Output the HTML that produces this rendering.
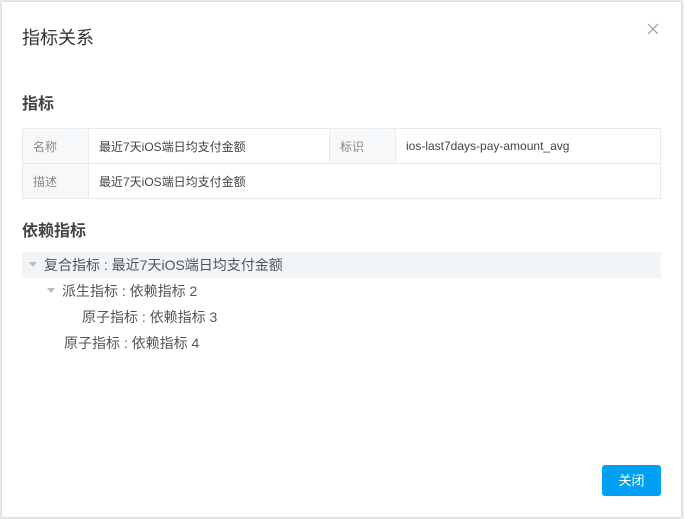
<!DOCTYPE html>
<html><head><meta charset="utf-8"><style>
*{box-sizing:border-box;margin:0;padding:0}
body{width:684px;height:519px;background:#f0f0f0;font-family:"Liberation Sans","Noto Sans CJK SC",sans-serif;position:relative;overflow:hidden}
.m{position:absolute;left:2px;top:2px;width:679px;height:515px;background:#fff;box-shadow:0 0 3px rgba(0,0,0,.2)}
.t{position:absolute;left:20px;top:22px;font-size:18px;color:#333}
.x{position:absolute;left:645px;top:21px}
.h{position:absolute;left:20px;font-size:16px;font-weight:bold;color:#444}
table{position:absolute;left:20px;top:126px;width:639px;border-collapse:collapse;font-size:12px}
td{border:1px solid #e6ebf0;height:35px;padding:0 10px;color:#444}
td.l{background:#f7f8fa;color:#888;width:66px}
.r{position:absolute;left:20px;width:639px;height:26px;line-height:26px;font-size:14px;color:#555}
.tri{display:inline-block;width:0;height:0;border-left:4px solid transparent;border-right:4px solid transparent;border-top:5px solid #bbb;vertical-align:middle;margin-right:7px;position:relative;top:-2px}
.b{position:absolute;left:600px;top:463px;width:59px;height:31px;background:#00a0f5;color:#fff;border-radius:3px;font-size:13px;text-align:center;line-height:31px}
</style></head><body>
<div class="m">
<div class="t">指标关系</div>
<svg class="x" width="12" height="12" viewBox="0 0 12 12"><path d="M1 1L11 11M11 1L1 11" stroke="#999" stroke-width="1.2"/></svg>
<div class="h" style="top:88px">指标</div>
<table>
<tr><td class="l">名称</td><td style="width:241px">最近7天iOS端日均支付金额</td><td class="l">标识</td><td>ios-last7days-pay-amount_avg</td></tr>
<tr><td class="l">描述</td><td colspan="3">最近7天iOS端日均支付金额</td></tr>
</table>
<div class="h" style="top:215px">依赖指标</div>
<div class="r" style="top:250px;background:#f2f5f8;padding-left:7px"><span class="tri"></span>复合指标 : 最近7天iOS端日均支付金额</div>
<div class="r" style="top:276px;padding-left:25px"><span class="tri"></span>派生指标 : 依赖指标 2</div>
<div class="r" style="top:302px;padding-left:60px">原子指标 : 依赖指标 3</div>
<div class="r" style="top:328px;padding-left:42px">原子指标 : 依赖指标 4</div>
<div class="b">关闭</div>
</div>
</body></html>
